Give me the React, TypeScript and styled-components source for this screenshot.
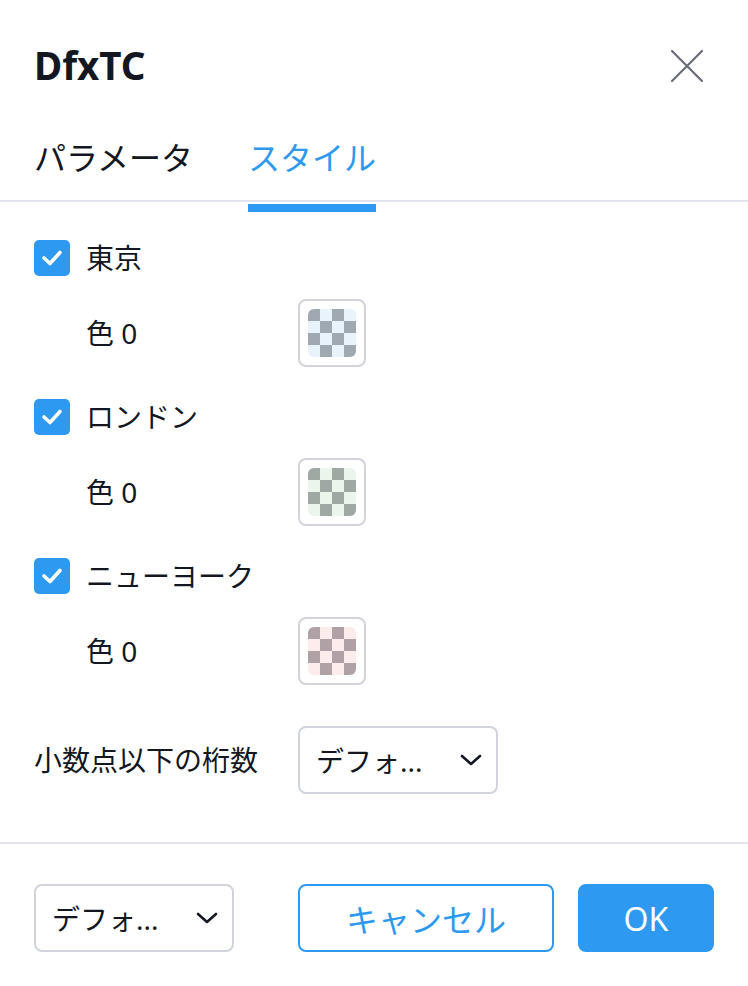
import styled, {createGlobalStyle} from "styled-components";

const GlobalStyle = createGlobalStyle`
  html, body {
    margin: 0;
    padding: 0;
    background: #fff;
  }
  body {
    font-family: "Noto Sans", "Noto Sans CJK JP", sans-serif;
    color: #131722;
  }
  * {
    box-sizing: border-box;
  }
`;

const BLUE = "#2e99f0";

type Swatch = { dark: string; light: string };

const sections: { name: string; swatch: Swatch }[] = [
  {name: "東京", swatch: {dark: "#a0a8b2", light: "#e8f3fb"}},
  {name: "ロンドン", swatch: {dark: "#9fa8a2", light: "#ebf5ec"}},
  {name: "ニューヨーク", swatch: {dark: "#b0a1a6", light: "#fdecec"}},
];

const Chevron = () => (
  <svg width="22" height="14" viewBox="0 0 22 14">
    <polyline points="2,3 11,11 20,3" fill="none" stroke="#131722" strokeWidth="2.6"
              strokeLinecap="round" strokeLinejoin="round"/>
  </svg>
);

const Check = () => (
  <svg width="22" height="18" viewBox="0 0 22 18">
    <polyline points="3,9 9,14.5 19,3.5" fill="none" stroke="#fff" strokeWidth="3.6"
              strokeLinecap="round" strokeLinejoin="round"/>
  </svg>
);

const Checker = ({swatch}: { swatch: Swatch }) => (
  <Board>
    {Array.from({length: 16}).map((_, i) => {
      const dark = (Math.floor(i / 4) + (i % 4)) % 2 === 0;
      return <Cell key={i} $color={dark ? swatch.dark : swatch.light}/>;
    })}
  </Board>
);

export default function App() {
  return <Dialog>
    <GlobalStyle/>
    <Header>
      <Title>DfxTC</Title>
      <Close aria-label="close">
        <svg width="34" height="34" viewBox="0 0 34 34">
          <path d="M2 2 L32 32 M32 2 L2 32" stroke="#6a6d78" strokeWidth="2.2" strokeLinecap="round"/>
        </svg>
      </Close>
    </Header>
    <TabBar>
      <Tab>パラメータ</Tab>
      <Tab $active>スタイル</Tab>
    </TabBar>
    <Content>
      {sections.map(s => (
        <Section key={s.name}>
          <CheckRow>
            <CheckBox><Check/></CheckBox>
            <Label>{s.name}</Label>
          </CheckRow>
          <ColorRow>
            <Label>色 0</Label>
            <SwatchButton><Checker swatch={s.swatch}/></SwatchButton>
          </ColorRow>
        </Section>
      ))}
      <DecimalRow>
        <Label>小数点以下の桁数</Label>
        <Select>
          <span>デフォ...</span>
          <Chevron/>
        </Select>
      </DecimalRow>
    </Content>
    <Footer>
      <Select>
        <span>デフォ...</span>
        <Chevron/>
      </Select>
      <Buttons>
        <Button $variant="outline">キャンセル</Button>
        <Button $variant="primary">OK</Button>
      </Buttons>
    </Footer>
  </Dialog>
}

const Dialog = styled.div`
  width: 748px;
  height: 986px;
  display: flex;
  flex-direction: column;
  background: #fff;
`;

const Header = styled.div`
  display: flex;
  align-items: center;
  justify-content: space-between;
  padding: 38px 44px 0 34px;
  height: 92px;
`;

const Title = styled.h1`
  margin: 0;
  font-family: "Noto Sans", sans-serif;
  font-size: 38.5px;
  font-weight: 700;
  line-height: 52px;
  color: #131722;
`;

const Close = styled.button`
  border: none;
  background: none;
  padding: 0;
  width: 34px;
  height: 34px;
  display: flex;
  margin-top: 2px;
  cursor: pointer;
`;

const TabBar = styled.div`
  display: flex;
  gap: 55px;
  padding: 42px 34px 0;
  border-bottom: 2px solid #e0e3eb;
`;

const Tab = styled.div<{ $active?: boolean }>`
  position: relative;
  font-size: 32px;
  line-height: 48px;
  padding-bottom: 18px;
  color: ${p => p.$active ? BLUE : "#131722"};

  &::after {
    content: "";
    display: ${p => p.$active ? "block" : "none"};
    position: absolute;
    left: 0;
    right: 0;
    top: calc(100% + 4px);
    height: 8px;
    background: ${BLUE};
  }
`;

const Content = styled.div`
  flex: 1;
  padding: 38px 34px 0;
  display: flex;
  flex-direction: column;
`;

const Section = styled.div`
  display: flex;
  flex-direction: column;
  margin-bottom: 32px;
`;

const CheckRow = styled.div`
  display: flex;
  align-items: center;
  gap: 16px;
  height: 36px;
`;

const CheckBox = styled.div`
  width: 36px;
  height: 36px;
  border-radius: 5px;
  background: ${BLUE};
  display: flex;
  align-items: center;
  justify-content: center;
`;

const Label = styled.span`
  font-size: 28px;
  line-height: 40px;
  color: #131722;
`;

const ColorRow = styled.div`
  display: grid;
  grid-template-columns: 212px auto;
  align-items: center;
  margin-top: 23px;
  padding-left: 52px;
`;

const SwatchButton = styled.div`
  width: 68px;
  height: 68px;
  border: 2px solid #d1d4dc;
  border-radius: 8px;
  display: flex;
  align-items: center;
  justify-content: center;
`;

const Board = styled.div`
  width: 48px;
  height: 48px;
  border-radius: 6px;
  overflow: hidden;
  display: grid;
  grid-template-columns: repeat(4, 12px);
  grid-template-rows: repeat(4, 12px);
`;

const Cell = styled.div<{ $color: string }>`
  background: ${p => p.$color};
`;

const DecimalRow = styled.div`
  display: grid;
  grid-template-columns: 264px auto;
  align-items: center;
  margin-top: 9px;
`;

const Select = styled.div`
  width: 200px;
  height: 68px;
  border: 2px solid #d1d4dc;
  border-radius: 8px;
  display: flex;
  align-items: center;
  justify-content: space-between;
  padding: 0 14px 0 16px;
  font-size: 28px;
  color: #131722;
`;

const Footer = styled.div`
  border-top: 2px solid #e0e3eb;
  padding: 40px 34px 34px;
  display: flex;
  align-items: center;
  justify-content: space-between;
`;

const Buttons = styled.div`
  display: flex;
  gap: 24px;
`;

const Button = styled.button<{ $variant: "outline" | "primary" }>`
  height: 68px;
  border-radius: 8px;
  font-family: "Noto Sans", "Noto Sans CJK JP", sans-serif;
  font-size: 32px;
  cursor: pointer;
  width: ${p => p.$variant === "primary" ? "136px" : "256px"};
  border: 2px solid ${BLUE};
  background: ${p => p.$variant === "primary" ? BLUE : "#fff"};
  color: ${p => p.$variant === "primary" ? "#fff" : BLUE};
`;
